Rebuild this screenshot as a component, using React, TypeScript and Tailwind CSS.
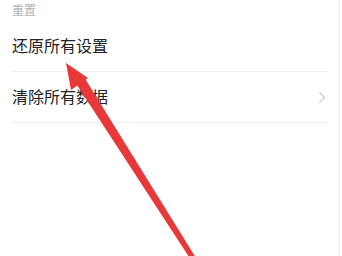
export default function App() {
  return (
    <div
      className="relative w-[342px] h-[256px] overflow-hidden bg-white"
      style={{ fontFamily: '"Noto Sans CJK SC", "Noto Sans", sans-serif' }}
    >
      <div className="w-[340px] h-full border-r border-[#ececec]">
        <div className="px-3 pt-[3px] h-[22px] text-[12px] leading-[14px] text-[#b3b3b3]">
          重置
        </div>

        <div className="pl-3">
          <div className="h-[50px] flex items-center pr-3 border-b border-[#f0f0f0] w-[316px]">
            <span className="text-[16px] leading-none text-[#222] -mt-[3px]">还原所有设置</span>
          </div>
          <div className="h-[51px] flex items-center justify-between pr-[2px] border-b border-[#f0f0f0] w-[316px]">
            <span className="text-[16px] leading-none text-[#222] -mt-[3px]">清除所有数据</span>
            <svg width="8" height="13" viewBox="0 0 8 13" fill="none">
              <path d="M1.5 1.5 L6.5 6.5 L1.5 11.5" stroke="#cfcfcf" strokeWidth="1.4" />
            </svg>
          </div>
        </div>
      </div>

      {/* red annotation arrow */}
      <svg
        className="absolute left-0 top-0 pointer-events-none"
        width="342"
        height="256"
        viewBox="0 0 342 256"
      >
        <polygon points="66,63 88,78 71,90" fill="#e8383a" />
        <polygon points="75,82 84,77 196,258 191,260" fill="#e8383a" />
      </svg>
    </div>
  )
}
